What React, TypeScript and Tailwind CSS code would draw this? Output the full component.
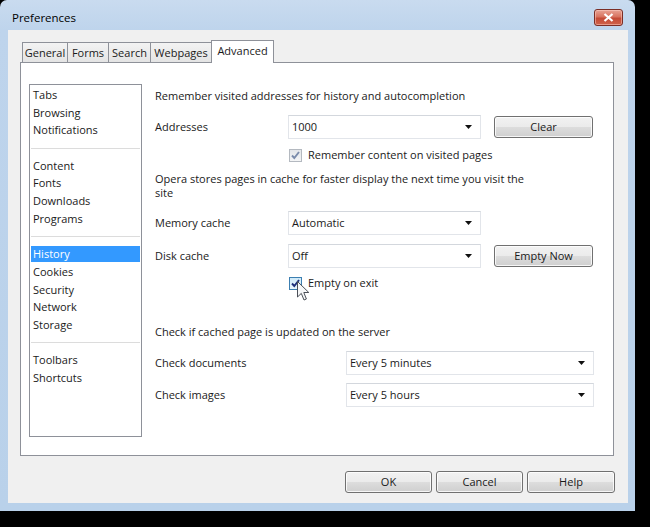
import React from "react";

const winBtn =
  "flex items-center justify-center rounded-[3px] border border-[#707070] bg-[linear-gradient(to_bottom,#f2f2f2_0%,#ebebeb_50%,#dddddd_50%,#cfcfcf_100%)] shadow-[inset_0_0_0_1px_rgba(255,255,255,0.8)] text-[11px] text-[#1a1a1a]";

function Arrow() {
  return (
    <svg width="7" height="4" viewBox="0 0 7 4" className="shrink-0">
      <path d="M0 0 L7 0 L3.5 4 Z" fill="#111" />
    </svg>
  );
}

function Combo({ value, width }: { value: string; width: string }) {
  return (
    <div
      className={`${width} h-[24px] flex items-center justify-between bg-white border border-[#e2e5ea] border-t-[#d3d7dd] pl-[3px] pr-[8px]`}
    >
      <span>{value}</span>
      <Arrow />
    </div>
  );
}

function Check({ active }: { active?: boolean }) {
  return (
    <div
      className={`w-[13px] h-[13px] border flex items-center justify-center ${
        active
          ? "border-[#3c7fb1] bg-[linear-gradient(to_bottom,#cfeaf9,#e9f6fd)]"
          : "border-[#b4b9c0] bg-[linear-gradient(to_bottom,#e4e6e9,#f4f5f6)]"
      }`}
    >
      <svg width="11" height="11" viewBox="0 0 11 11">
        <path
          d="M2 5.5 L4.3 8 L9 2"
          fill="none"
          stroke={active ? "#1d2f7a" : "#7b8cab"}
          strokeWidth="1.9"
        />
      </svg>
    </div>
  );
}

function Cursor() {
  return (
    <svg
      width="13"
      height="21"
      viewBox="0 0 13 21"
      className="absolute left-[8px] top-[4px]"
    >
      <path
        d="M0.5 0.5 L0.5 16 L4.3 12.4 L7 19 L9.4 18 L6.8 11.5 L11.8 11.5 Z"
        fill="#f6f7f8"
        stroke="#4a4f57"
        strokeWidth="1"
      />
    </svg>
  );
}

const listItems: (string | null)[] = [
  "Tabs",
  "Browsing",
  "Notifications",
  null,
  "Content",
  "Fonts",
  "Downloads",
  "Programs",
  null,
  "History",
  "Cookies",
  "Security",
  "Network",
  "Storage",
  null,
  "Toolbars",
  "Shortcuts",
];

const tabs = [
  { name: "General", w: "w-[46px]" },
  { name: "Forms", w: "w-[42px]" },
  { name: "Search", w: "w-[43px]" },
  { name: "Webpages", w: "w-[62px]" },
];

export default function App() {
  return (
    <div className="w-[650px] h-[527px] bg-black font-['Open_Sans',sans-serif] text-[11px] text-[#1a1a1a]">
      <div className="w-[635px] h-[511px] rounded-t-[7px] bg-[linear-gradient(to_bottom,#c9dbef_0px,#bed4ec_30px,#b9d1ea_100%)] flex flex-col">
        {/* title bar */}
        <div className="h-[30px] flex items-start justify-between">
          <span className="pl-[12px] pt-[9px] leading-[18px] text-[11.5px] text-black">
            Preferences
          </span>
          <div className="mt-[9px] mr-[12px] w-[29px] h-[17px] rounded-[3px] border border-[#7b2e26] bg-[linear-gradient(to_bottom,#e8a395_0%,#d8735f_45%,#c44a36_55%,#d0634b_100%)] shadow-[inset_0_0_0_1px_rgba(255,210,200,0.5)] flex items-center justify-center">
            <svg width="11" height="9" viewBox="0 0 11 9">
              <path
                d="M1.5 1 L9.5 8 M9.5 1 L1.5 8"
                stroke="#fff"
                strokeWidth="2.2"
              />
            </svg>
          </div>
        </div>

        {/* client area */}
        <div className="ml-[8px] mr-[7px] h-[473px] bg-[#f0f0f0] flex flex-col">
          {/* tabs */}
          <div className="pt-[10px] pl-[14px] flex items-end h-[32px]">
            {tabs.map((t, i) => (
              <div
                key={t.name}
                className={`${t.w} h-[20px] ${
                  i > 0 ? "-ml-px" : ""
                } border border-b-0 border-[#8e9199] bg-[linear-gradient(to_bottom,#f3f3f3,#e4e4e4)] flex items-center justify-center leading-[20px]`}
              >
                {t.name}
              </div>
            ))}
            <div className="w-[63px] h-[23px] -ml-px -mb-px relative z-10 border border-b-0 border-[#8e9199] bg-white flex items-center justify-center pb-[2px]">
              Advanced
            </div>
          </div>

          {/* panel */}
          <div className="ml-[12px] w-[594px] h-[394px] border border-[#8e9199] bg-white flex pl-[8px] pt-[21px]">
            {/* category list */}
            <div className="w-[113px] h-[353px] border border-[#8e9199] px-[1px] pt-[1.2px]">
              {listItems.map((it, i) =>
                it === null ? (
                  <div key={i} className="h-[17.7px] flex items-center">
                    <div className="w-full h-px bg-[#dcdcdc]" />
                  </div>
                ) : (
                  <div key={i} className="h-[17.7px] flex items-center">
                    <div
                      className={`w-full h-[16px] leading-[16px] pl-[2px] ${
                        it === "History" ? "bg-[#3399ff] text-white" : ""
                      }`}
                    >
                      {it}
                    </div>
                  </div>
                )
              )}
            </div>

            {/* settings */}
            <div className="ml-[13px] pt-[4px] flex flex-col">
              <div className="h-[16px] leading-[16px]">
                Remember visited addresses for history and autocompletion
              </div>

              <div className="mt-[11px] h-[24px] flex items-center">
                <div className="w-[133px]">Addresses</div>
                <Combo value="1000" width="w-[193px]" />
                <div className={`${winBtn} ml-[13px] w-[99px] h-[22px]`}>Clear</div>
              </div>

              <div className="mt-[8px] h-[16px] flex items-center pl-[134px] gap-[6px]">
                <Check />
                <span>Remember content on visited pages</span>
              </div>

              <div className="mt-[9px] leading-[14px] w-[380px]">
                Opera stores pages in cache for faster display the next time you visit the site
              </div>

              <div className="mt-[11px] h-[24px] flex items-center">
                <div className="w-[133px]">Memory cache</div>
                <Combo value="Automatic" width="w-[193px]" />
              </div>

              <div className="mt-[9px] h-[24px] flex items-center">
                <div className="w-[133px]">Disk cache</div>
                <Combo value="Off" width="w-[193px]" />
                <div className={`${winBtn} ml-[13px] w-[99px] h-[22px]`}>Empty Now</div>
              </div>

              <div className="mt-[7px] h-[16px] flex items-center pl-[134px] gap-[6px]">
                <div className="relative">
                  <Check active />
                  <Cursor />
                </div>
                <span>Empty on exit</span>
              </div>

              <div className="mt-[33px] h-[16px] leading-[16px]">
                Check if cached page is updated on the server
              </div>

              <div className="mt-[11px] h-[24px] flex items-center">
                <div className="w-[191px]">Check documents</div>
                <Combo value="Every 5 minutes" width="w-[248px]" />
              </div>

              <div className="mt-[8px] h-[24px] flex items-center">
                <div className="w-[191px]">Check images</div>
                <Combo value="Every 5 hours" width="w-[248px]" />
              </div>
            </div>
          </div>

          {/* dialog buttons */}
          <div className="mt-[15px] flex justify-end gap-[4px] pr-[13px]">
            <div
              className={`${winBtn} w-[87px] h-[22px] border-[#3c7fb1] shadow-[inset_0_0_0_1px_rgba(180,225,250,0.9)]`}
            >
              OK
            </div>
            <div className={`${winBtn} w-[87px] h-[22px]`}>Cancel</div>
            <div className={`${winBtn} w-[88px] h-[22px]`}>Help</div>
          </div>
        </div>
      </div>
    </div>
  );
}
